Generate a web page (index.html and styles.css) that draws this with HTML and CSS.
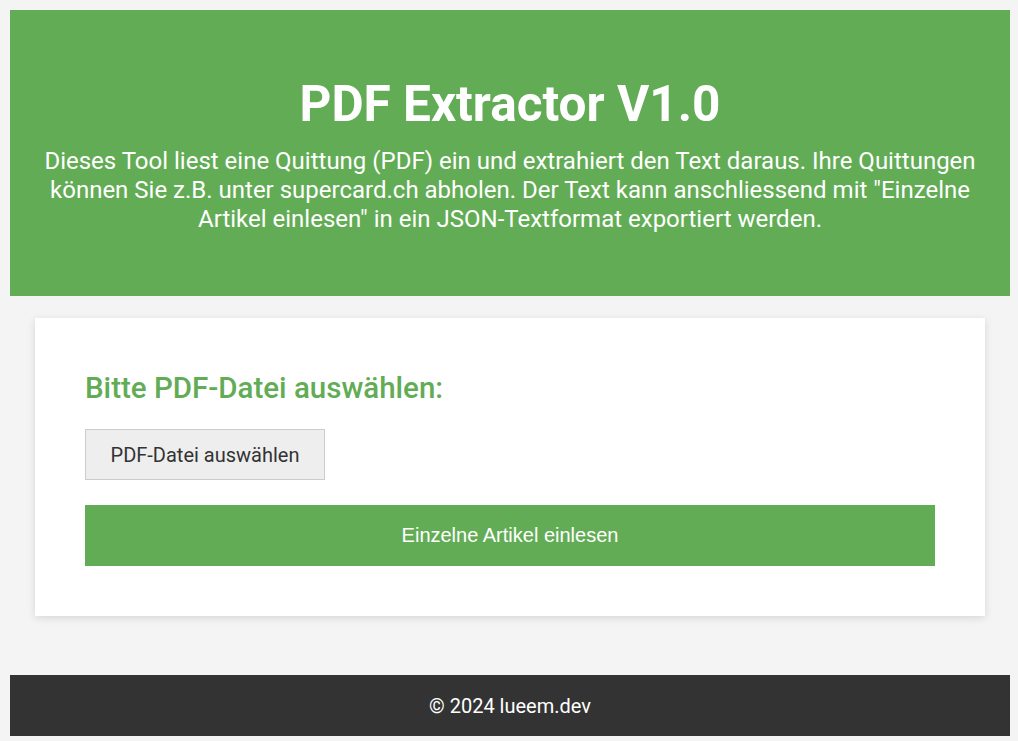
FILE: index.html
```html
<!DOCTYPE html>
<html lang="de">
<head>
<meta charset="utf-8">
<title>PDF Extractor V1.0</title>
<link rel="stylesheet" href="styles.css">
</head>
<body>
<div class="page">
  <header class="hero">
    <h1 class="hero-title">PDF Extractor V1.0</h1>
    <p class="hero-text">Dieses Tool liest eine Quittung (PDF) ein und extrahiert den Text daraus. Ihre Quittungen können Sie z.B. unter supercard.ch abholen. Der Text kann anschliessend mit "Einzelne Artikel einlesen" in ein JSON-Textformat exportiert werden.</p>
  </header>
  <main class="card">
    <h2 class="card-title">Bitte PDF-Datei auswählen:</h2>
    <div class="file-row">
      <button class="file-btn" type="button">PDF-Datei auswählen</button>
    </div>
    <button class="primary-btn" type="button">Einzelne Artikel einlesen</button>
  </main>
  <footer class="footer">© 2024 lueem.dev</footer>
</div>
</body>
</html>
```
FILE: styles.css
```css
* { box-sizing: border-box; }
html, body { margin: 0; padding: 0; }
body {
  background: #f4f4f4;
  font-family: Roboto, "Liberation Sans", Arial, sans-serif;
  color: #333;
}
.page {
  width: 1000px;
  margin: 10px 0 0 10px;
}
.hero {
  background: #62ac55;
  color: #fff;
  text-align: center;
  height: 286px;
  padding: 65px 20px 0;
}
.hero-title {
  margin: 0;
  font-size: 49.5px;
  font-weight: 700;
  line-height: 58px;
}
.hero-text {
  margin: 14px 0 0;
  font-size: 24px;
  line-height: 29px;
}
.card {
  display: flex;
  flex-direction: column;
  align-items: flex-start;
  background: #fff;
  margin: 22px 25px 0;
  padding: 53px 50px 50px;
  box-shadow: 0 2px 8px rgba(0, 0, 0, 0.12);
}
.card-title {
  margin: 0;
  color: #62ac55;
  font-size: 29.5px;
  font-weight: 500;
  line-height: normal;
}
.file-row { margin-top: 24px; }
.file-btn {
  font-family: Roboto, sans-serif;
  font-size: 20px;
  color: #333;
  background: #eeeeee;
  border: 1px solid #cccccc;
  border-radius: 0;
  height: 51px;
  width: 240px;
  padding: 0;
}
.primary-btn {
  margin-top: 25px;
  align-self: stretch;
  height: 61px;
  border: none;
  border-radius: 0;
  background: #62ac55;
  color: #fff;
  font-family: "Liberation Sans", Arial, sans-serif;
  font-size: 20px;
}
.footer {
  margin-top: 59px;
  background: #333333;
  color: #fff;
  text-align: center;
  font-size: 20px;
  height: 61px;
  display: flex;
  align-items: center;
  justify-content: center;
}
```
